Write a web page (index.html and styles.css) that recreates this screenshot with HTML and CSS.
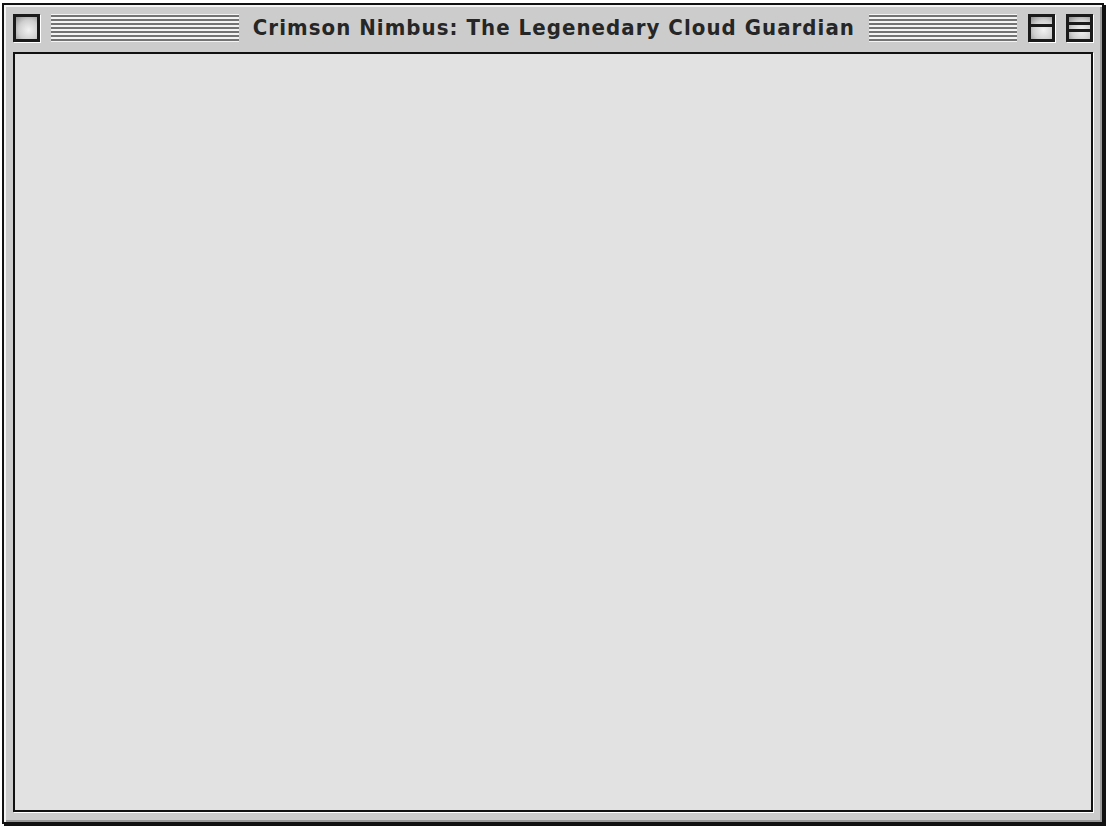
FILE: index.html
```html
<!DOCTYPE html>
<html>
<head>
<meta charset="utf-8">
<link rel="stylesheet" href="styles.css">
</head>
<body>
<div class="window">
  <div class="titlebar">
    <div class="box close-box"></div>
    <div class="stripes stripes-left"></div>
    <div class="title">Crimson Nimbus: The Legenedary Cloud Guardian</div>
    <div class="stripes stripes-right"></div>
    <div class="box zoom-box"><span class="bar zoom-line"></span></div>
    <div class="box collapse-box"><span class="bar line-a"></span><span class="bar line-b"></span></div>
  </div>
  <div class="content"></div>
</div>
</body>
</html>
```
FILE: styles.css
```css
html, body {
  margin: 0;
  padding: 0;
  background: #ffffff;
}
body {
  width: 1110px;
  height: 833px;
  overflow: hidden;
}
.window {
  margin: 3px 0 0 2px;
  width: 1098px;
  height: 817px;
  border: 2px solid #111;
  box-shadow: 2px 2px 0 #111;
  background: #cccccc;
  display: flex;
  flex-direction: column;
  box-sizing: content-box;
  position: relative;
}
.window::before {
  content: "";
  position: absolute;
  inset: 0;
  box-shadow: inset 2px 2px 0 #f4f4f4, inset -2px -2px 0 #9a9a9a;
  pointer-events: none;
}
.titlebar {
  display: flex;
  align-items: center;
  height: 28px;
  padding: 9px 9px 0 9px;
  gap: 11px;
}
.box {
  width: 21px;
  height: 22px;
  border: 3px solid #1a1a1a;
  box-shadow: 1px 1px 0 #ffffff;
  background: radial-gradient(circle at 60% 60%, #f2f2f2 0%, #cfcfcf 55%, #8e8e8e 100%);
  position: relative;
  flex: none;
}
.stripes {
  height: 28px;
  min-width: 0;
  background: repeating-linear-gradient(to bottom, #f4f4f4 0px, #f4f4f4 1px, #737373 1px, #737373 3px, #f4f4f4 3px, #f4f4f4 4px);
}
.stripes-left { flex: 189 1 0; }
.stripes-right { flex: 149 1 0; }
.title {
  flex: none;
  padding: 0 3px;
  font-family: "DejaVu Sans Condensed", "DejaVu Sans", sans-serif;
  font-weight: bold;
  font-size: 22px;
  color: #262626;
  line-height: 28px;
  letter-spacing: 1.05px;
}
.bar {
  position: absolute;
  left: 0;
  right: 0;
  height: 3px;
  background: #1a1a1a;
}
.zoom-line { top: 7px; }
.line-a { top: 5px; }
.line-b { top: 12px; }
.content {
  margin: 10px 9px 10px 9px;
  flex: 1;
  border: 2px solid #111;
  box-shadow: 1px 1px 0 #ffffff;
  background: #e2e2e2;
}
```
